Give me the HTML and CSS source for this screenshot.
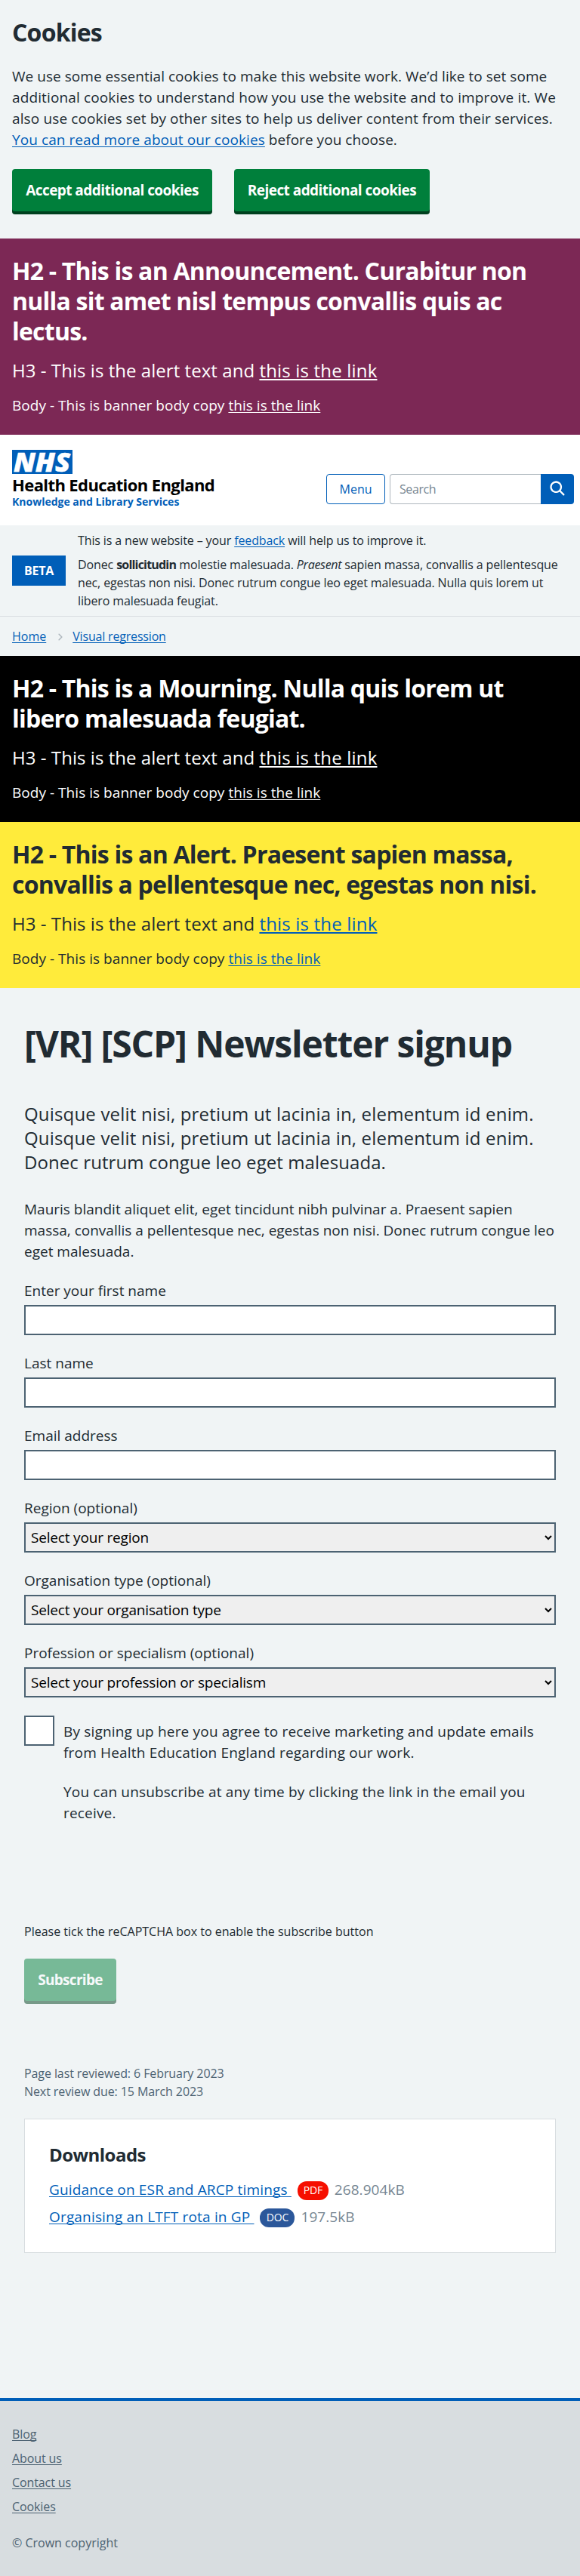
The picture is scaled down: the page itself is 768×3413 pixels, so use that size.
FILE: index.html
```html
<!DOCTYPE html>
<html lang="en">
<head>
<meta charset="utf-8">
<title>Newsletter signup</title>
<link rel="stylesheet" href="styles.css">
</head>
<body>
<section class="cookies">
  <h2 class="h2">Cookies</h2>
  <p class="copy">We use some essential cookies to make this website work. We’d like to set some<br><span class="loose">additional cookies to understand how you use the website and to improve it. We<br>also use cookies set by other sites to help us deliver content from their services.</span><br><a class="tight-plus" href="#">You can read more about our cookies</a> before you choose.</p>
  <div class="actions"><button class="btn">Accept additional cookies</button><button class="btn btn-reject">Reject additional cookies</button></div>
</section>

<section class="banner announcement">
  <h2 class="h2">H2 - This is an Announcement. Curabitur non<br>nulla sit amet nisl tempus convallis quis ac<br>lectus.</h2>
  <h3 class="h3">H3 - This is the alert text and <a href="#">this is the link</a></h3>
  <p class="copy">Body - This is banner body copy <a href="#">this is the link</a></p>
</section>

<header class="header">
  <div class="brand">
    <svg class="nhs" width="80" height="32" viewBox="0 0 80 32"><rect width="80" height="32" fill="#005eb8"/><text class="nhs-text" x="2" y="29" textLength="75" lengthAdjust="spacingAndGlyphs">NHS</text></svg>
    <div class="org">Health Education England</div>
    <div class="service">Knowledge and Library Services</div>
  </div>
  <div class="tools">
    <button class="menu">Menu</button>
    <form class="search"><input class="search-input" type="text" placeholder="Search"><button class="search-btn" type="button"><svg width="27" height="27" viewBox="0 0 24 24" fill="#fff"><path d="M19.71 18.29l-4.11-4.1a7 7 0 1 0-1.41 1.41l4.1 4.11a1 1 0 0 0 1.42 0 1 1 0 0 0 0-1.42zM5 10a5 5 0 1 1 5 5 5 5 0 0 1-5-5z"/></svg></button></form>
  </div>
</header>

<section class="phase">
  <strong class="tag">BETA</strong>
  <div class="phase-text">
    <p>This is a new website – your <a href="#">feedback</a> will help us to improve it.</p>
    <p>Donec <b>sollicitudin</b> molestie malesuada. <em>Praesent</em> sapien massa, convallis a pellentesque<br>nec, egestas non nisi. Donec rutrum congue leo eget malesuada. Nulla quis lorem ut<br>libero malesuada feugiat.</p>
  </div>
</section>

<nav class="crumbs"><a href="#">Home</a><svg width="18" height="18" viewBox="0 0 24 24" fill="#aeb7bd"><path d="M15.5 12a1 1 0 0 1-.29.71l-5 5a1 1 0 0 1-1.42-1.42l4.3-4.29-4.3-4.29a1 1 0 0 1 1.42-1.42l5 5a1 1 0 0 1 .29.71z"/></svg><a href="#">Visual regression</a></nav>

<section class="banner mourning">
  <h2 class="h2">H2 - This is a Mourning. Nulla quis lorem ut<br>libero malesuada feugiat.</h2>
  <h3 class="h3">H3 - This is the alert text and <a href="#">this is the link</a></h3>
  <p class="copy">Body - This is banner body copy <a href="#">this is the link</a></p>
</section>
<section class="banner alert">
  <h2 class="h2">H2 - This is an Alert. Praesent sapien massa,<br>convallis a pellentesque nec, egestas non nisi.</h2>
  <h3 class="h3">H3 - This is the alert text and <a href="#">this is the link</a></h3>
  <p class="copy">Body - This is banner body copy <a href="#">this is the link</a></p>
</section>

<main class="main">
  <h1 class="h1">[VR] [SCP] Newsletter signup</h1>
  <p class="lede">Quisque velit nisi, pretium ut lacinia in, elementum id enim.<br>Quisque velit nisi, pretium ut lacinia in, elementum id enim.<br><span class="lede-end">Donec rutrum congue leo eget malesuada.</span></p>
  <p class="copy intro">Mauris blandit aliquet elit, eget tincidunt nibh pulvinar a. Praesent sapien<br>massa, convallis a pellentesque nec, egestas non nisi. Donec rutrum congue leo<br>eget malesuada.</p>
  <form>
    <div class="field"><label for="first">Enter your first name</label><input id="first" class="control" type="text"></div>
    <div class="field"><label for="last">Last name</label><input id="last" class="control" type="text"></div>
    <div class="field"><label for="email">Email address</label><input id="email" class="control" type="text"></div>
    <div class="field"><label for="region">Region (optional)</label><select id="region" class="control select"><option>Select your region</option></select></div>
    <div class="field"><label for="orgtype">Organisation type (optional)</label><select id="orgtype" class="control select"><option>Select your organisation type</option></select></div>
    <div class="field"><label for="prof">Profession or specialism (optional)</label><select id="prof" class="control select"><option>Select your profession or specialism</option></select></div>
    <div class="consent">
      <span class="box"></span>
      <div class="consent-text">
        <p>By signing up here you agree to receive marketing and update emails<br>from Health Education England regarding our work.</p>
        <p>You can unsubscribe at any time by clicking the link in the email you<br>receive.</p>
      </div>
    </div>
    <p class="captcha">Please tick the reCAPTCHA box to enable the subscribe button</p>
    <button class="btn subscribe" type="button" disabled>Subscribe</button>
  </form>
  <p class="review">Page last reviewed: 6 February 2023<br>Next review due: 15 March 2023</p>
  <section class="card">
    <h2 class="card-title">Downloads</h2>
    <div class="file"><a href="#">Guidance on ESR and ARCP timings </a><span class="badge pdf">PDF</span><span class="size">268.904kB</span></div>
    <div class="file"><a href="#">Organising an LTFT rota in GP </a><span class="badge doc">DOC</span><span class="size">197.5kB</span></div>
  </section>
</main>

<footer class="footer">
  <a href="#">Blog</a><a href="#">About us</a><a href="#">Contact us</a><a href="#">Cookies</a>
  <p>© Crown copyright</p>
</footer>
</body>
</html>
```
FILE: styles.css
```css
* { box-sizing: border-box; }
body { margin: 0; background: #f0f4f5; color: #212b32; font: 400 19px/28px "Open Sans", "Noto Sans", sans-serif; white-space: nowrap; }
h1, h2, h3, p { margin: 0; }
a { color: #005eb8; text-decoration: underline; text-decoration-skip-ink: none; text-underline-offset: 2px; text-decoration-thickness: 1px; }
button, input, select { font: inherit; letter-spacing: inherit; margin: 0; }

/* Type */
.h1 { font-size: 48px; line-height: 56px; font-weight: 700; letter-spacing: -1.12px; }
.h2 { font-size: 32px; line-height: 40px; font-weight: 700; letter-spacing: -.78px; }
.h3 { font-size: 24px; line-height: 32px; font-weight: 400; letter-spacing: .05px; }
.h3 a { text-decoration-thickness: 2px; letter-spacing: .18px; }
.lede { font-size: 24px; line-height: 32px; letter-spacing: .18px; }
.lede-end { letter-spacing: .08px; }
.copy { letter-spacing: .04px; }
.intro { letter-spacing: 0; }
.loose { letter-spacing: .13px; }
.tight-plus { letter-spacing: .08px; }

/* Buttons */
.btn { height: 56px; border: 0; border-radius: 4px; background: #007f3b; box-shadow: 0 4px 0 #00401e; color: #fff; font-weight: 700; width: 265px; padding: 0; letter-spacing: -.55px; }
.btn-reject { width: 259px; }

/* Cookie notice */
.cookies { height: 316px; padding: 23px 16px 0; }
.cookies .copy { margin-top: 24px; }
.actions { display: flex; gap: 29px; margin-top: 25px; }

/* Banners */
.banner { padding: 23px 16px 25px; }
.banner .h3 { margin-top: 16px; }
.banner .copy { margin-top: 16px; }
.announcement { background: #7c2855; color: #fff; }
.mourning { background: #000; color: #fff; }
.alert { background: #ffeb3b; }
.announcement a, .mourning a { color: #fff; }

/* Header */
.header { height: 120px; background: #fff; display: flex; justify-content: space-between; padding: 20px 8px 0 16px; }
.nhs { display: block; }
.nhs-text { font: italic 800 36px "Open Sans", sans-serif; fill: #fff; stroke: #fff; stroke-width: .6px; }
.org { color: #000; font-size: 22px; line-height: 26px; font-weight: 700; letter-spacing: -.6px; margin-top: 1px; }
.service { color: #005eb8; font-size: 14px; line-height: 20px; font-weight: 700; letter-spacing: 0; }
.tools { display: flex; gap: 6px; margin-top: 32px; height: 40px; }
.menu { width: 78px; height: 40px; border: 1px solid #005eb8; border-radius: 4px; background: #fff; color: #005eb8; font-size: 16px; padding: 0; }
.search { display: flex; }
.search-input { width: 200px; height: 40px; border: 1px solid #aeb7bd; border-right: 0; border-radius: 4px 0 0 4px; background: #fff; font-size: 16px; padding: 0 12px; letter-spacing: -.4px; }
.search-input::placeholder { color: #768692; opacity: 1; }
.search-btn { width: 44px; height: 40px; border: 0; border-radius: 0 4px 4px 0; background: #005eb8; display: flex; align-items: center; justify-content: center; padding: 0 0 1px; }

/* Phase */
.phase { display: flex; align-items: center; gap: 16px; height: 121px; border-bottom: 1px solid #d8dde0; padding-left: 16px; font-size: 16px; line-height: 24px; }
.tag { width: 71px; height: 40px; line-height: 40px; background: #005eb8; color: #fff; text-align: center; font-weight: 700; letter-spacing: -.3px; }
.phase-text { letter-spacing: -.12px; }
.phase-text p + p { margin-top: 8px; }
.phase-text b { font-weight: 700; letter-spacing: -.8px; }
.phase-text em { letter-spacing: -.3px; }

/* Breadcrumb */
.crumbs { display: flex; align-items: center; height: 52px; padding: 0 16px 1px; font-size: 16px; line-height: 24px; }
.crumbs svg { margin: 3px 7px 0 10px; }
.crumbs a + svg + a { letter-spacing: -.18px; }

/* Main */
.main { padding: 46px 32px 0; }
.lede { margin-top: 49px; }
.intro { margin-top: 32px; }
.field { display: flex; flex-direction: column; gap: 5px; }
.intro + form { margin-top: 24px; }
.field + .field { margin-top: 23px; }
.control { width: 704px; height: 40px; border: 2px solid #4c6272; border-radius: 0; background: #fff; padding: 5px; }
.select { background: #efefef; color: #000; letter-spacing: -.18px; padding: 4px 5px 7px 3px; }
.consent { display: flex; gap: 12px; margin-top: 24px; }
.box { width: 40px; height: 40px; border: 2px solid #4c6272; background: #fff; }
.consent-text { padding-top: 7px; letter-spacing: .18px; }
.consent-text p + p { margin-top: 24px; }
.captcha { font-size: 16px; line-height: 24px; margin-top: 131px; }
.subscribe { display: block; width: 122px; margin-top: 24px; opacity: .5; letter-spacing: -.7px; }
.review { font-size: 16px; line-height: 24px; color: #4c6272; margin-top: 84px; letter-spacing: -.09px; }
.card { margin-top: 24px; height: 178px; border: 1px solid #d8dde0; background: #fff; padding: 31px 32px 0; }
.card-title { font-size: 24px; line-height: 32px; font-weight: 700; letter-spacing: -.53px; margin-bottom: 16px; }
.file { display: flex; margin-bottom: 8px; letter-spacing: .17px; white-space: pre; }
.badge { height: 25px; margin: 3px 8px 0; border-radius: 12px; color: #fff; font-size: 14px; line-height: 24px; text-align: center; letter-spacing: -.2px; }
.pdf { width: 41px; background: #f60f00; }
.doc { width: 46px; background: #2b579a; }
.size { color: #768692; letter-spacing: .06px; }

/* Footer */
.footer { margin-top: 192px; height: 236px; border-top: 4px solid #005eb8; background: #d8dde0; padding: 32px 16px 0; display: flex; flex-direction: column; align-items: flex-start; gap: 8px; font-size: 16px; line-height: 24px; color: #4c6272; }
.footer a { color: #4c6272; letter-spacing: -.1px; }
.footer p { margin-top: 16px; }
```
